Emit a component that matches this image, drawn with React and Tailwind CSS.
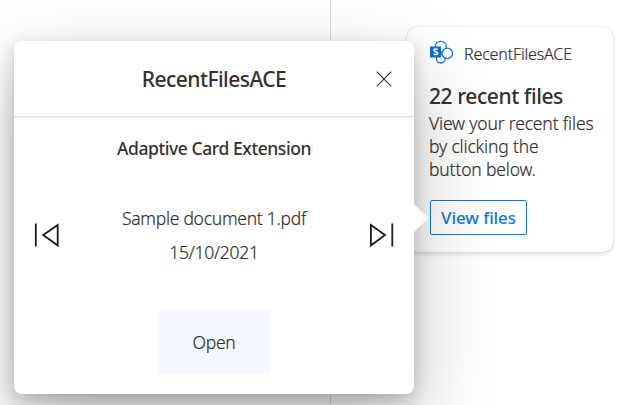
function SharePointIcon() {
  return (
    <svg width="25" height="24" viewBox="0 0 25 24" className="shrink-0" fill="none">
      <g stroke="#1478d4" strokeWidth="1.3" fill="#fff">
        <circle cx="11.8" cy="18.6" r="4.4" />
        <circle cx="11.8" cy="6.8" r="5.5" />
        <circle cx="18.3" cy="13.4" r="5.2" />
      </g>
      <rect x="1" y="6.5" width="11" height="11" fill="#0f6fcc" />
      <path d="M8.700 9.500c-1.700-.8-3.900-.5-3.900.8 0 1.700 3.900 1.100 3.900 2.900 0 1.400-2.200 1.700-4.100.8" stroke="#fff" strokeWidth="1.500" />
    </svg>
  );
}

function PreviousIcon() {
  return (
    <svg width="26" height="24" viewBox="0 0 26 24" fill="none" stroke="#1b1a19" strokeWidth="1.8">
      <path d="M2.800.4v23.200M24.700 2v20.500L10.200 12z" />
    </svg>
  );
}

function NextIcon() {
  return (
    <svg width="26" height="24" viewBox="0 0 26 24" fill="none" stroke="#1b1a19" strokeWidth="1.8">
      <path d="M23.300.4v23.200M1.900 2v20.500L16 12z" />
    </svg>
  );
}

function AdaptiveCard() {
  return (
    <section className="ml-[76px] mt-[27px] flex h-[225px] w-[206px] flex-col rounded-[10px] bg-white pl-[22px] shadow-[0_2px_4px_rgba(0,0,0,0.13),0_0_2px_rgba(0,0,0,0.16)]">
      <header className="mt-[13px] flex h-6 items-center gap-[10px]">
        <SharePointIcon />
        <span className="pt-[3px] text-[16px] font-light tracking-[-0.15px] [-webkit-text-stroke:0.2px]">RecentFilesACE</span>
      </header>
      <h2 className="mt-[18px] text-[21px] font-medium leading-7 tracking-[-0.42px]">22 recent files</h2>
      <p className="mt-[2px] whitespace-nowrap text-[17.500px] font-light leading-[23px] tracking-[-0.16px] [-webkit-text-stroke:0.2px]">
        View your recent files
        <br />
        by clicking the
        <br />
        button below.
      </p>
      <button className="ml-px mt-[19px] flex h-[35px] w-[97px] shrink-0 items-center justify-center rounded-[2px] border border-[#1478d4] pt-px text-[17px] font-medium tracking-[-0.1px] text-[#1478d4]">
        View files
      </button>
    </section>
  );
}

function QuickView() {
  return (
    <div className="absolute left-[14px] top-[41px] flex h-[353px] w-[400px] flex-col rounded-[8px] bg-white shadow-[0_32px_80px_rgba(0,0,0,0.26),0_6px_18px_rgba(0,0,0,0.20)]">
      <header className="flex h-[76px] shrink-0 items-center border-b border-[#dedede] pl-[38px] pr-[22px] shadow-[0_1px_1px_rgba(0,0,0,0.05)]">
        <h1 className="flex-1 pt-[3px] text-center text-[21px] font-medium tracking-[-0.55px]">RecentFilesACE</h1>
        <button aria-label="Close">
          <svg width="16" height="16" viewBox="0 0 16 16" stroke="#323130" strokeWidth="1.1">
            <path d="M.7.7l14.600 14.600M15.300.7L.7 15.300" />
          </svg>
        </button>
      </header>
      <h3 className="mt-[19px] text-center text-[17.500px] font-medium leading-6 tracking-[-0.43px]">Adaptive Card Extension</h3>
      <div className="mt-[41px] flex h-[68px] items-center justify-between px-[19px]">
        <button aria-label="Previous">
          <PreviousIcon />
        </button>
        <div className="text-center text-[17.500px] font-light leading-[34px] tracking-[-0.27px] [-webkit-text-stroke:0.2px]">
          <p>Sample document 1.pdf</p>
          <p>15/10/2021</p>
        </div>
        <button aria-label="Next">
          <NextIcon />
        </button>
      </div>
      <button className="mx-auto mt-[41px] h-16 w-[113px] bg-[#f3f9fe] pt-px text-[17.500px] font-light tracking-[-0.3px] [-webkit-text-stroke:0.2px]">Open</button>
      <span className="absolute left-full top-[163px] h-7 w-[14px] bg-white [clip-path:polygon(0_0,100%_50%,0_100%)]" />
    </div>
  );
}

export default function App() {
  return (
    <main className="relative flex h-[405px] w-[632px] overflow-hidden bg-white font-['Noto_Sans','Open_Sans',sans-serif] text-[#323130]">
      <div className="w-[331px] shrink-0 border-r border-[#dcdcdc]" />
      <AdaptiveCard />
      <QuickView />
    </main>
  );
}
